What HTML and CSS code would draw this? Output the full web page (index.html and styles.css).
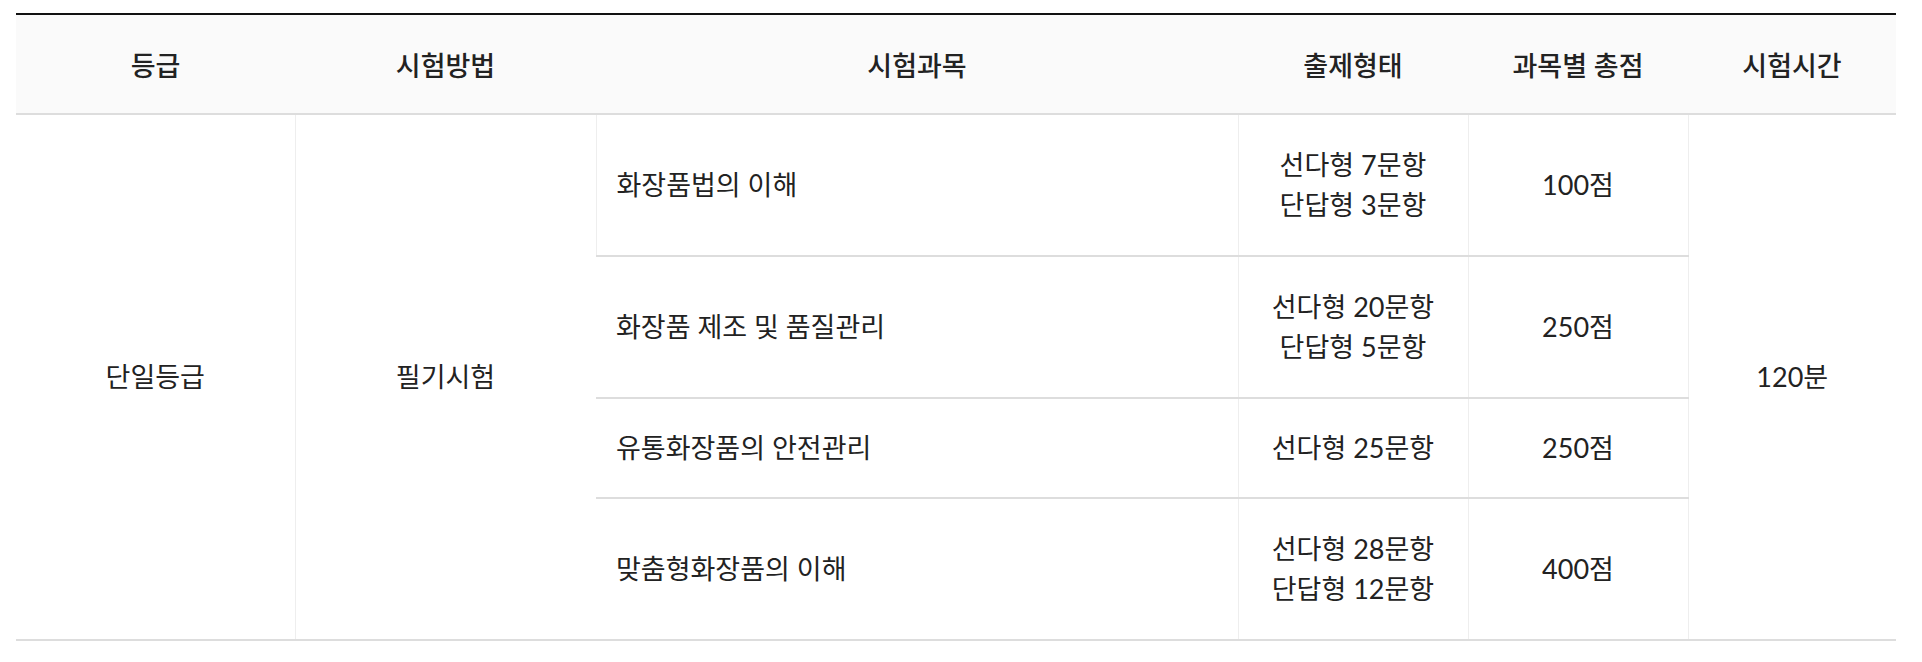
FILE: index.html
```html
<!DOCTYPE html>
<html lang="ko">
<head>
<meta charset="utf-8">
<title>시험과목</title>
<link rel="stylesheet" href="styles.css">
</head>
<body>
<div class="wrap">
<table class="exam">
  <colgroup>
    <col class="c1"><col class="c2"><col class="c3"><col class="c4"><col class="c5"><col class="c6">
  </colgroup>
  <thead>
    <tr>
      <th>등급</th>
      <th>시험방법</th>
      <th>시험과목</th>
      <th>출제형태</th>
      <th>과목별 총점</th>
      <th>시험시간</th>
    </tr>
  </thead>
  <tbody>
    <tr class="two">
      <td rowspan="4">단일등급</td>
      <td rowspan="4">필기시험</td>
      <td class="subj">화장품법의 이해</td>
      <td>선다형 7문항<br>단답형 3문항</td>
      <td>100점</td>
      <td rowspan="4" class="last">120분</td>
    </tr>
    <tr class="two">
      <td class="subj">화장품 제조 및 품질관리</td>
      <td>선다형 20문항<br>단답형 5문항</td>
      <td>250점</td>
    </tr>
    <tr class="one">
      <td class="subj">유통화장품의 안전관리</td>
      <td>선다형 25문항</td>
      <td>250점</td>
    </tr>
    <tr class="two">
      <td class="subj">맞춤형화장품의 이해</td>
      <td>선다형 28문항<br>단답형 12문항</td>
      <td>400점</td>
    </tr>
  </tbody>
</table>
</div>
</body>
</html>
```

FILE: styles.css
```css
html, body {
  margin: 0;
  padding: 0;
  background: #fff;
}
.wrap {
  padding: 13px 26px 0 16px;
}
.exam {
  width: 1880px;
  border-collapse: collapse;
  table-layout: fixed;
  font-family: "Lato", "Noto Sans CJK KR", sans-serif;
  color: #222;
  border-top: 2px solid #111;
  border-bottom: 2px solid #ddd;
}
.c1 { width: 279px; }
.c2 { width: 301px; }
.c3 { width: 642px; }
.c4 { width: 230px; }
.c5 { width: 220px; }
.c6 { width: 208px; }
.exam th {
  height: 98px;
  padding: 0;
  background: #fafafa;
  font-size: 27px;
  font-weight: 500;
  color: #222;
  text-align: center;
  vertical-align: middle;
  border-bottom: 2px solid #ddd;
}
.exam td {
  padding: 0 20px;
  font-size: 27px;
  line-height: 40px;
  text-align: center;
  vertical-align: middle;
  border-left: 1px solid #eee;
  border-bottom: 2px solid #ddd;
}
.exam td:first-child {
  border-left: none;
}
.exam tr.two td { height: 140px; }
.exam tr.one td { height: 98px; }
.exam td.subj {
  text-align: left;
}
```
